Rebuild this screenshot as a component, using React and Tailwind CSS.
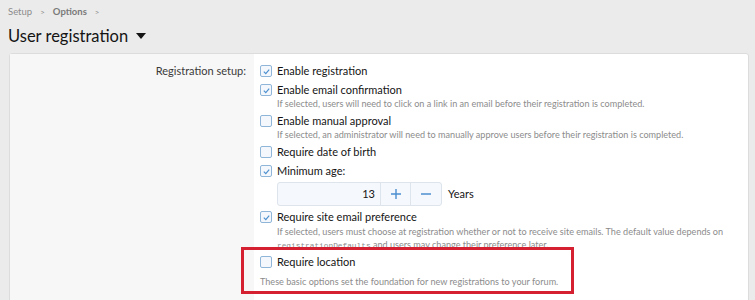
import React from 'react';

const FONT = { fontFamily: 'Lato, "Noto Sans", "Liberation Sans", sans-serif' };
const MONO = { fontFamily: '"Liberation Mono", "DejaVu Sans Mono", monospace' };

const Check = ({ checked }) => (
  <span className="mt-[2px] flex h-[12px] w-[12px] shrink-0 items-center justify-center rounded-[2px] border border-[#8fb6d9] bg-[#f4f8fc]">
    {checked && (
      <svg width="9" height="9" viewBox="0 0 10 10">
        <path d="M2 5.2 L4.2 7.3 L8 2.8" fill="none" stroke="#4c8fcf" strokeWidth="1.3" />
      </svg>
    )}
  </span>
);

const Option = ({ checked, label, hint, children }) => (
  <li className="flex gap-[5px]">
    <Check checked={checked} />
    <div className="flex flex-col">
      <span className="text-[11px] leading-[16px] text-[#141414]">{label}</span>
      {hint && <span className="text-[9.1px] leading-[12px] text-[#8c8c8c]">{hint}</span>}
      {children}
    </div>
  </li>
);

export default function App() {
  return (
    <div className="h-[300px] w-[755px] overflow-hidden bg-[#ebebeb]" style={FONT}>
      <div className="flex items-center gap-[8px] px-[8px] pt-[4px] text-[9.5px] leading-[16px] text-[#8c8c8c]">
        <span>Setup</span>
        <span className="text-[8px]">&gt;</span>
        <span className="font-bold text-[#7a7a7a]">Options</span>
        <span className="text-[8px]">&gt;</span>
      </div>
      <h1 className="flex items-center gap-[8px] px-[8px] pt-[3px] text-[16.5px] leading-[26px] text-[#141414]">
        User registration
        <svg width="10" height="6" viewBox="0 0 10 6">
          <path d="M0 0 H10 L5 6 Z" fill="#141414" />
        </svg>
      </h1>
      <div className="ml-[9px] mr-[6px] mt-[4px] flex h-[260px] rounded-[3px] border border-[#dcdcdc] bg-white">
        <div className="w-[244px] shrink-0 bg-[#f7f7f7] pr-[8px] pt-[9px] text-right text-[11px] leading-[16px] text-[#3a3a3a]">
          Registration setup:
        </div>
        <div className="relative flex-1 pl-[6px] pr-[10px] pt-[9px]">
          <ul className="flex flex-col gap-[3px]">
            <Option checked label="Enable registration" />
            <Option
              checked
              label="Enable email confirmation"
              hint="If selected, users will need to click on a link in an email before their registration is completed."
            />
            <Option
              label="Enable manual approval"
              hint="If selected, an administrator will need to manually approve users before their registration is completed."
            />
            <Option label="Require date of birth" />
            <Option checked label="Minimum age:">
              <div className="mt-[3px] flex items-center gap-[6px]">
                <div className="flex h-[24px] w-[165px] overflow-hidden rounded-[3px] border border-[#dde4eb] bg-[#f5f8fc]">
                  <span className="flex-1 pr-[5px] text-right text-[11px] leading-[22px] text-[#141414]">13</span>
                  <button className="flex w-[30px] items-center justify-center border-l border-[#dde4eb]">
                    <svg width="10" height="10" viewBox="0 0 10 10">
                      <path d="M5 0 V10 M0 5 H10" stroke="#4c8fcf" strokeWidth="1.4" />
                    </svg>
                  </button>
                  <button className="flex w-[31px] items-center justify-center border-l border-[#dde4eb]">
                    <svg width="10" height="10" viewBox="0 0 10 10">
                      <path d="M0 5 H10" stroke="#4c8fcf" strokeWidth="1.4" />
                    </svg>
                  </button>
                </div>
                <span className="text-[11px] text-[#141414]">Years</span>
              </div>
            </Option>
            <li className="flex gap-[5px]">
              <Check checked />
              <div className="flex flex-col">
                <span className="text-[11px] leading-[16px] text-[#141414]">Require site email preference</span>
                <span className="whitespace-nowrap text-[9.1px] leading-[13px] text-[#8c8c8c]">
                  If selected, users must choose at registration whether or not to receive site emails. The default value depends on
                </span>
                <span className="block h-[13px] whitespace-nowrap text-[9.1px] leading-[13px] text-[#8c8c8c]">
                  <span className="text-[7.8px] leading-[0]" style={MONO}>registrationDefaults</span> and users may change their preference later.
                </span>
              </div>
            </li>
            <Option label="Require location" />
          </ul>
          <p className="mt-[6px] text-[9.1px] leading-[12px] text-[#8c8c8c]">
            These basic options set the foundation for new registrations to your forum.
          </p>
          <div className="pointer-events-none absolute left-[-13px] top-[193px] h-[47px] w-[333px] border-[3px] border-[#d42030]" />
        </div>
      </div>
    </div>
  );
}
